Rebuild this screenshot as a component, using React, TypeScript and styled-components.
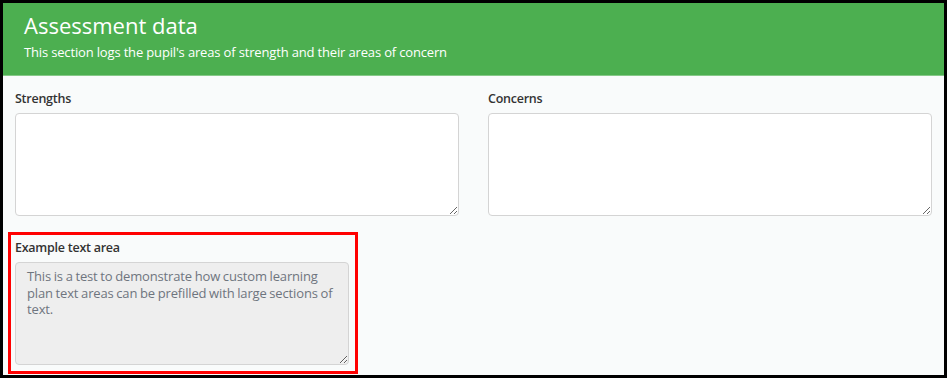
import React from 'react'
import styled, { createGlobalStyle } from 'styled-components'

const GlobalStyle = createGlobalStyle`
  html, body {
    margin: 0;
    padding: 0;
    background: #ffffff;
  }
  body {
    font-family: "Open Sans", "Liberation Sans", sans-serif;
  }
  * {
    box-sizing: border-box;
  }
`

type FieldProps = {
  label: string;
  value?: string;
  readOnly?: boolean;
}

const Field = ({ label, value, readOnly }: FieldProps) => {
  return (
    <FieldBox>
      <Label>{label}</Label>
      <TextArea
        $readOnly={readOnly}
        readOnly={readOnly}
        defaultValue={value}
      />
    </FieldBox>
  )
}

const exampleText =
  'This is a test to demonstrate how custom learning\n' +
  'plan text areas can be prefilled with large sections of\n' +
  'text.'

const App = () => {
  return (
    <>
      <GlobalStyle />
      <Frame>
        <Header>
          <Title>Assessment data</Title>
          <Subtitle>This section logs the pupil's areas of strength and their areas of concern</Subtitle>
        </Header>
        <Body>
          <Columns>
            <Field label='Strengths' />
            <Field label='Concerns' />
          </Columns>
          <Highlight>
            <Field
              label='Example text area'
              readOnly
              value={exampleText}
            />
          </Highlight>
        </Body>
      </Frame>
    </>
  )
}

const Frame = styled.div`
  width: 947px;
  height: 378px;
  border: 3px solid #000000;
  background-color: #f9fbfb;
  display: flex;
  flex-direction: column;
  overflow: hidden;
`

const Header = styled.header`
  height: 73px;
  padding: 7px 21px 0 21px;
  background-color: #4caf50;
  border-bottom: 1px solid #86c988;
  color: #ffffff;
`

const Title = styled.h1`
  margin: 0 0 3px 0;
  font-size: 22px;
  line-height: 30px;
  font-weight: 400;
`

const Subtitle = styled.p`
  margin: 0;
  font-size: 13px;
  line-height: 18px;
  font-weight: 400;
  letter-spacing: -0.16px;
`

const Body = styled.section`
  padding: 14px 12px 0 12px;
  display: flex;
  flex-direction: column;
`

const Columns = styled.div`
  display: grid;
  grid-template-columns: 444px 444px;
  column-gap: 29px;
`

const FieldBox = styled.div`
  display: flex;
  flex-direction: column;
`

const Label = styled.label`
  font-size: 12.5px;
  line-height: 18px;
  font-weight: 600;
  letter-spacing: -0.25px;
  color: #333333;
  margin-bottom: 5px;
`

const TextArea = styled.textarea<{ $readOnly?: boolean }>`
  height: 103px;
  width: 100%;
  padding: 5px 3px 5px 11px;
  border: 1px solid #d4d4d4;
  border-radius: 4px;
  background-color: ${(p) => (p.$readOnly ? '#eeeeee' : '#ffffff')};
  color: #6e757e;
  font-family: "Open Sans", "Liberation Sans", sans-serif;
  font-size: 13px;
  line-height: 16.5px;
  letter-spacing: -0.15px;
  word-spacing: -0.5px;
  resize: vertical;
  outline: none;
  overflow: hidden;
`

const Highlight = styled.div`
  width: 350px;
  margin: 16px 0 0 -7px;
  padding: 4px 6px 6px 4px;
  border: 3px solid #ff0000;
`

export default App
